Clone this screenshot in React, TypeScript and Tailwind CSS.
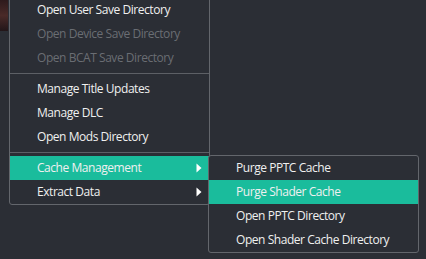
import React from 'react';

type Item =
    | { kind: 'item'; label: string; disabled?: boolean; active?: boolean; submenu?: boolean }
    | { kind: 'sep' };

const mainItems: Item[] = [
    { kind: 'item', label: 'Open User Save Directory' },
    { kind: 'item', label: 'Open Device Save Directory', disabled: true },
    { kind: 'item', label: 'Open BCAT Save Directory', disabled: true },
    { kind: 'sep' },
    { kind: 'item', label: 'Manage Title Updates' },
    { kind: 'item', label: 'Manage DLC' },
    { kind: 'item', label: 'Open Mods Directory' },
    { kind: 'sep' },
    { kind: 'item', label: 'Cache Management', active: true, submenu: true },
    { kind: 'item', label: 'Extract Data', submenu: true },
];

const cacheItems: Item[] = [
    { kind: 'item', label: 'Purge PPTC Cache' },
    { kind: 'item', label: 'Purge Shader Cache', active: true },
    { kind: 'item', label: 'Open PPTC Directory' },
    { kind: 'item', label: 'Open Shader Cache Directory' },
];

const Arrow = () => (
    <svg width="6" height="10" viewBox="0 0 6 10" className="mr-[7px]">
        <path d="M0.5 0.5 L5.5 5 L0.5 9.5 Z" fill="#ffffff" />
    </svg>
);

const MenuRow: React.FC<{ item: Item }> = ({ item }) => {
    if (item.kind === 'sep') {
        return (
            <div className="h-[7px] flex items-center">
                <div className="h-px w-full bg-[#5d6066]"></div>
            </div>
        );
    }
    return (
        <div
            className={`h-[24px] flex items-center justify-between pl-[27px] ${
                item.active ? 'bg-[#1abc9c]' : ''
            } ${item.disabled ? 'text-[#6a6d73]' : 'text-[#f0f0f0]'}`}
        >
            <span>{item.label}</span>
            {item.submenu && <Arrow />}
        </div>
    );
};

export default function App() {
    return (
        <div
            className="relative w-[426px] h-[259px] overflow-hidden bg-[#2b2e35] text-[12px] leading-none tracking-[-0.45px]"
            style={{ fontFamily: '"Open Sans", "Noto Sans", sans-serif' }}
        >
            {/* game icon peeking out behind the menu */}
            <div className="w-[8px] h-[31px] bg-gradient-to-b from-[#2e1a1c] via-[#4a2a28] to-[#221619]"></div>

            {/* context menu */}
            <div className="absolute left-[9px] top-[-3px] w-[201px] border border-[#63666c] rounded-b-[3px] bg-[#2b2e35]">
                {mainItems.map((item, i) => (
                    <MenuRow key={i} item={item} />
                ))}
            </div>

            {/* cache management submenu */}
            <div className="absolute left-[208px] top-[155px] w-[211px] border border-[#63666c] rounded-[3px] bg-[#2b2e35]">
                {cacheItems.map((item, i) => (
                    <MenuRow key={i} item={item} />
                ))}
            </div>
        </div>
    );
}
